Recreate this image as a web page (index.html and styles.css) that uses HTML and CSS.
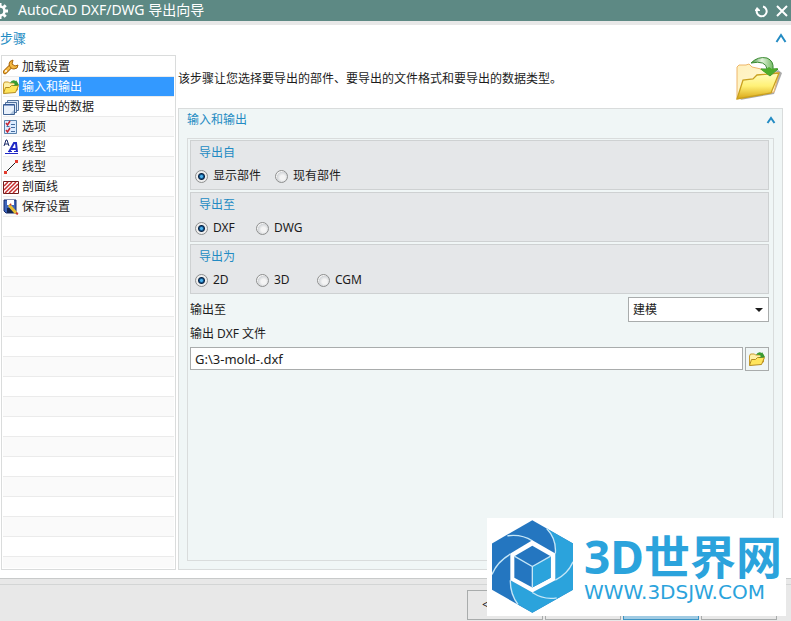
FILE: index.html
```html
<!DOCTYPE html>
<html lang="zh-CN">
<head>
<meta charset="utf-8">
<title>AutoCAD DXF/DWG 导出向导</title>
<link rel="stylesheet" href="styles.css">
</head>
<body>
<svg class="defs" aria-hidden="true">
  <defs>
    <linearGradient id="gold" x1="0" y1="0" x2="0" y2="1"><stop offset="0" stop-color="#fffcc0"/><stop offset=".5" stop-color="#fff176"/><stop offset="1" stop-color="#d9a514"/></linearGradient>
    <linearGradient id="cream" x1="0" y1="0" x2="1" y2="1"><stop offset="0" stop-color="#fff0bd"/><stop offset="1" stop-color="#fffbd8"/></linearGradient>
    <linearGradient id="green" x1="0" y1="0" x2="1" y2="0"><stop offset="0" stop-color="#3f8f3f"/><stop offset=".4" stop-color="#e3f3dc"/><stop offset="1" stop-color="#43a030"/></linearGradient>
    <symbol id="folder" viewBox="0 0 46 46">
      <path d="m4 44 34-6 8-21-4-3z" fill="#aaa"/>
      <path d="M1 43V11l2-2h7l3-1 3 3 27 6-5 19z" fill="url(#cream)" stroke="#eeb66b"/>
      <path d="m1 43 6-19 10-1 4-4 22-2-8 20z" fill="url(#gold)" stroke="#c9a01f" stroke-width="1.3"/>
      <path d="M15 7Q22 0 31 2q7 3 6 11h5l-8 7-9-7h6Q30 4 15 7z" fill="url(#green)" stroke="#3a8a32"/>
      <path d="m42 12-8 8-10-7h6l3-2 3 2z" fill="#4dac2b"/>
    </symbol>
    <symbol id="folder-small" viewBox="0 0 16 16">
      <path d="M.500 14V5l1-2h4l1 1h8v7z" fill="#fff1a8" stroke="#c99b2c"/>
      <path d="m.500 14.500 2-6h4l2-2h7l-3 7z" fill="#ffe55c" stroke="#b58c20"/>
      <path d="M7 4q2-4 6-2V1l3 5-6 1 2-2q-2-2-5-1z" fill="#399b32"/>
    </symbol>
  </defs>
</svg>
<div class="dialog">
  <header class="titlebar">
    <svg class="gear" viewBox="0 0 16 16"><circle cx="8" cy="8" r="4.500" fill="none" stroke="#fff" stroke-width="2.600"/><path d="M8 0v3M8 13v3M0 8h3M13 8h3M2.300 2.300l2 2M11.700 11.700l2 2M2.300 13.700l2-2M11.700 4.300l2-2" stroke="#fff" stroke-width="3"/></svg>
    <h1>AutoCAD DXF/DWG 导出向导</h1>
    <button class="plain" aria-label="重置"><svg width="14" height="14" viewBox="0 0 14 14"><path d="M2 5.500A5 5 0 1 0 8 2.500" fill="none" stroke="#fff" stroke-width="2"/><path d="M0 7V6l2-3 3 3v1z" fill="#fff"/></svg></button>
    <button class="plain" aria-label="关闭"><svg width="14" height="14" viewBox="0 0 14 14"><path d="m2 2 10 10M12 2 2 12" stroke="#fff" stroke-width="2"/></svg></button>
  </header>
  <main class="content">
    <div class="section-head">
      <h2>步骤</h2>
      <button class="plain" aria-label="折叠步骤"><svg width="12" height="10" viewBox="0 0 12 10"><path d="m1.500 9 4.500-7 4.500 7" fill="none" stroke="#238bc3" stroke-width="2"/></svg></button>
    </div>
    <div class="columns">
      <ol class="steps">
        <li><button><svg viewBox="0 0 16 16"><path d="m2 13 6-6" stroke="#a8660c" stroke-width="4.500" stroke-linecap="round"/><path d="m2 13 6-6" stroke="#f5b942" stroke-width="2.500" stroke-linecap="round"/><path d="M10 1Q6 2 6 5q1 5 5 5 4 0 4-4l-3 1-3-2z" fill="#f5b942" stroke="#a8660c"/><circle cx="3" cy="12" r="1" fill="#fff"/></svg>加载设置</button></li>
        <li class="selected"><button aria-current="step"><svg><use href="#folder-small"/></svg>输入和输出</button></li>
        <li><button><svg viewBox="0 0 16 16"><path d="M4.500 1.500h11v10h-11z" fill="#dde8f7" stroke="#52729c"/><path d="M2.500 3.500h11v10h-11z" fill="#dde8f7" stroke="#52729c"/><path d="M.500 5.500h11v10H.500z" fill="#e8f0fa" stroke="#3f6292"/><path d="M1 6h10" stroke="#28509a" stroke-width="1"/><path d="m11 11-4 4h4z" fill="#a9bfd9"/></svg>要导出的数据</button></li>
        <li><button><svg viewBox="0 0 16 16"><path d="M1.500 1.500h12v13h-12z" fill="#dcecff" stroke="#5a83ad"/><path d="m3 4 1.500 2L7 2M3 11l1.500 2L7 9" fill="none" stroke="#c52732" stroke-width="1.500"/><path d="M3.500 7.500h3M8 5.500h4M8 8.500h4M8 12.500h4" stroke="#466da0"/></svg>选项</button></li>
        <li><button><svg viewBox="0 0 16 16"><path d="m1 7 2-6h1l2 6M2 5h3" fill="none" stroke="#172765"/><path d="m6 13 5-9h2l1 9M8 10h5" fill="none" stroke="#2029c5" stroke-width="2"/><path d="M5 12.500h4M11 12.500h4M2 14.500h13" stroke="#2029c5"/></svg>线型</button></li>
        <li><button><svg viewBox="0 0 16 16"><path d="M3 13 13 3" stroke="#222"/><path d="M1 12h3v3H1zM12 1h3v3h-3z" fill="#e33b2e"/></svg>线型</button></li>
        <li><button><svg viewBox="0 0 16 16"><path d="M.500 2.500h15v12H.500z" fill="#fff" stroke="#701c1c"/><path d="m1 7 4-4M1 11l8-8M2 14 13 3M6 14l9-9M10 14l5-5" stroke="#c52d2d" stroke-width="1.500"/></svg>剖面线</button></li>
        <li><button><svg viewBox="0 0 16 16"><path d="M1 1h12v13H3l-2-2z" fill="#3d65bb" stroke="#142b6c"/><path d="M4 1h7v5H4z" fill="#fff"/><path d="M4 9h7v5H4z" fill="#132551"/><path d="m6 6 7 8" stroke="#e8bd30" stroke-width="3"/><path d="m7 5 1 1M13 14l2 1" stroke="#c4382c" stroke-width="2"/></svg>保存设置</button></li>
      </ol>
      <div class="detail">
        <div class="intro">
          <p>该步骤让您选择要导出的部件、要导出的文件格式和要导出的数据类型。</p>
          <svg width="46" height="46"><use href="#folder"/></svg>
        </div>
        <section class="panel">
          <div class="panel-head">
            <h2>输入和输出</h2>
            <button class="plain" aria-label="折叠输入和输出"><svg width="10" height="8" viewBox="0 0 10 8"><path d="m1.500 7 3.500-5 3.500 5" fill="none" stroke="#238bc3" stroke-width="2"/></svg></button>
          </div>
          <div class="form">
            <fieldset><legend>导出自</legend>
              <div class="choices"><label><input type="radio" name="from" checked>显示部件</label><label><input type="radio" name="from">现有部件</label></div>
            </fieldset>
            <fieldset><legend>导出至</legend>
              <div class="choices"><label><input type="radio" name="to" checked>DXF</label><label><input type="radio" name="to">DWG</label></div>
            </fieldset>
            <fieldset><legend>导出为</legend>
              <div class="choices"><label><input type="radio" name="as" checked>2D</label><label><input type="radio" name="as">3D</label><label><input type="radio" name="as">CGM</label></div>
            </fieldset>
            <div class="target">
              <label for="target">输出至</label>
              <select id="target"><option>建模</option></select>
            </div>
            <label class="file-label" for="file">输出 DXF 文件</label>
            <div class="file">
              <input id="file" type="text" value="G:\3-mold-.dxf">
              <button aria-label="浏览"><svg width="16" height="16"><use href="#folder-small"/></svg></button>
            </div>
          </div>
        </section>
      </div>
    </div>
  </main>
  <footer class="actions">
    <button>&lt;</button>
    <button aria-label="下一步"></button>
    <button class="primary" aria-label="完成"></button>
    <button aria-label="取消"></button>
  </footer>
</div>
<aside class="brand">
  <svg class="brand-mark" viewBox="126 45 243 278">
    <path d="m247 45 122 70v139l-122 69-121-69V115z" fill="#2476c0"/>
    <path d="m290 70 79 45v139l-122 69-43-25q-23-30-23-73l66 37 69-37v-80q5-40-26-75z" fill="#2ba3dc"/>
    <g fill="none" stroke="#c5e6f7" stroke-width="4"><path d="M172 92q42-6 75 15M290 70q30 32 26 75M369 170q-15 36-53 55M320 278q-38 7-73-16M204 298q-24-32-23-73M126 208q15-38 55-61"/></g>
    <path d="m247 105 69 40v80l-69 37-66-37v-80z" fill="#fff"/>
    <path d="m247 122 55 31v65l-55 29-54-29v-65z" fill="#2476c0"/>
    <path d="m247 184 55-31v65l-55 29z" fill="#2ba3dc"/>
    <path d="m193 153 54 31 55-31M247 184v63" fill="none" stroke="#c5e6f7" stroke-width="4"/>
  </svg>
  <div class="brand-text">
    <strong>3D世界网</strong>
    <span>WWW.3DSJW.COM</span>
  </div>
</aside>
</body>
</html>
```
FILE: styles.css
```css
* { box-sizing: border-box; }
body {
  margin: 0;
  font: 12px/16px "Noto Sans", "Noto Sans CJK SC", sans-serif;
  color: #1c1c1c;
  overflow: hidden;
}
h1, h2, p, ol { margin: 0; padding: 0; font-size: inherit; font-weight: normal; }
button, input, select { font: inherit; color: inherit; margin: 0; }
svg { display: block; flex: none; }
.defs { position: absolute; width: 0; height: 0; }
.plain { display: block; padding: 0; border: 0; background: none; }

.dialog { display: flex; flex-direction: column; height: 100vh; background: #fff; }

.titlebar {
  display: flex; align-items: center; gap: 6px;
  height: 25px; flex: none; padding-right: 2px;
  background: #5d8984; border-bottom: 4px solid #e8e8e8;
  color: #fff; font-size: 14px; line-height: 18px;
}
.titlebar h1 { flex: 1; margin: 0 0 2px 4px; }
.gear { width: 16px; height: 16px; margin-left: -8px; }

.content { flex: 1; min-height: 0; display: flex; flex-direction: column; padding: 0 8px 8px 0; }
.section-head { display: flex; align-items: center; justify-content: space-between; height: 26px; flex: none; margin-right: -4px; }
.section-head h2 { font-size: 13px; }
h2, legend { color: #238bc3; }
.columns { flex: 1; min-height: 0; display: flex; gap: 2px; margin-top: 4px; padding-left: 1px; }

.steps {
  width: 175px; flex: none; list-style: none; padding: 1px;
  border: 1px solid #dadcdc;
  background: repeating-linear-gradient(#fff 0 19px, #ebebeb 19px 20px, #fafafa 20px 39px, #ebebeb 39px 40px) content-box;
}
.steps button {
  display: flex; align-items: center; gap: 3px; width: 100%; height: 19px; margin-bottom: 1px;
  padding: 0; border: 0; background: none; text-align: left;
}
.steps svg { width: 16px; height: 16px; }
.steps .selected button { background: linear-gradient(#3399ff, #3399ff) 16px 0 no-repeat; color: #fff; }

.detail { flex: 1; min-width: 0; display: flex; flex-direction: column; }
.intro { display: flex; align-items: center; justify-content: space-between; height: 53px; flex: none; padding: 0 1px 6px 0; }
.panel {
  flex: 1; min-height: 0; display: flex; flex-direction: column;
  padding: 0 8px 8px; border: 1px solid #d9dcdc; background: #f0f6f6;
}
.panel-head { display: flex; align-items: center; justify-content: space-between; height: 22px; flex: none; margin: 0 -2px 7px 0; }
.form { flex: 1; border: 1px solid #d9dcdc; padding: 1px 4px 0 2px; }

fieldset { margin: 0 0 2px; padding: 4px 4px 5px; border: 1px solid #ced1d2; background: #e5e7e9; min-width: 0; }
legend { float: left; width: 100%; padding: 0 4px; }
.choices { clear: both; display: flex; gap: 14px; padding-top: 7px; }
.choices label { display: flex; align-items: center; gap: 5px; min-width: 47px; }
input[type="radio"] {
  appearance: none; width: 13px; height: 13px; border: 1px solid #8e8f8f; border-radius: 50%;
  background: radial-gradient(circle at 60% 60%, #f4f4f4 25%, #d2d5d8 60%, #f4f4f4 66%);
}
input[type="radio"]:checked { background: radial-gradient(circle at 50% 50%, #4fb4ee 0 1px, #12538b 2px, #0b2544 3px, #eee 4px); }

.target { display: flex; align-items: center; justify-content: space-between; margin-top: 3px; }
select {
  appearance: none; width: 141px; height: 25px; padding: 0 4px; border: 1px solid #a9acac; border-radius: 0;
  background: url("data:image/svg+xml,%3Csvg xmlns='http://www.w3.org/2000/svg' width='8' height='4'%3E%3Cpath d='M0 0h8L4 4z' fill='%231c1c1c'/%3E%3C/svg%3E") right 5px center no-repeat #fff;
}
.file-label { display: block; margin: 4px 0 5px; }
.file { display: flex; gap: 2px; align-items: flex-start; }
.file input { flex: 1; min-width: 0; height: 23px; padding: 0 4px; border: 1px solid #a9acac; background: #fff; font-size: 13px; }
.file button { width: 24px; height: 24px; padding: 0 3px; border: 1px solid #a9acac; background: #f0f6f6; }

.actions {
  display: flex; justify-content: flex-end; gap: 2px; flex: none; height: 43px;
  padding: 11px 14px 2px 0; border-top: 1px solid #c8caca;
  background: linear-gradient(#d3d5d5, #d3d5d5) 0 5px / 100% 1px no-repeat #e8e8e8;
}
.actions button { width: 76px; height: 30px; padding: 0 0 0 14px; border: 1px solid #a9acac; background: #e8e8e8; text-align: left; }
.actions .primary { background: #a1cbe3; border-color: #3d94c4; }

.brand {
  position: absolute; right: 5px; bottom: 5px; width: 299px; height: 98px;
  display: flex; align-items: flex-start; gap: 11px; padding: 2px 0 0 5px; background: #fff; color: #2ba3dc;
}
.brand-mark { width: 81px; height: 93px; }
.brand-text { display: flex; flex-direction: column; padding-top: 12px; white-space: nowrap; }
.brand-text strong { font: bold 46px/48px "Noto Sans", "Noto Sans CJK SC", sans-serif; }
.brand-text span { margin-top: 2px; font: 20px/20px "DejaVu Sans", sans-serif; }
```
